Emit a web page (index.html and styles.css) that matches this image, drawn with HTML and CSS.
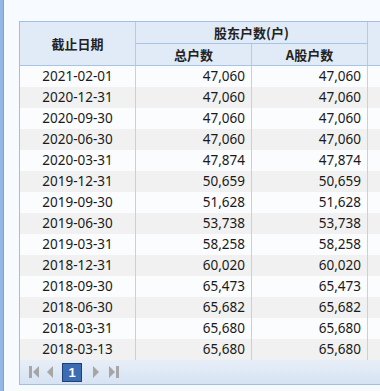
FILE: index.html
```html
<!DOCTYPE html>
<html lang="zh">
<head>
<meta charset="utf-8">
<link rel="stylesheet" href="styles.css">
</head>
<body>
<div class="edge"></div>
<div class="main">
  <div class="grid">
    <table class="tbl">
      <thead>
        <tr class="h1">
          <th rowspan="2" class="c">截止日期</th>
          <th colspan="2">股东户数(户)</th>
          <th rowspan="2"></th>
        </tr>
        <tr class="h2">
          <th>总户数</th>
          <th>A股户数</th>
        </tr>
      </thead>
      <tbody>
        <tr><td class="d">2021-02-01</td><td>47,060</td><td>47,060</td><td></td></tr>
        <tr><td class="d">2020-12-31</td><td>47,060</td><td>47,060</td><td></td></tr>
        <tr><td class="d">2020-09-30</td><td>47,060</td><td>47,060</td><td></td></tr>
        <tr><td class="d">2020-06-30</td><td>47,060</td><td>47,060</td><td></td></tr>
        <tr><td class="d">2020-03-31</td><td>47,874</td><td>47,874</td><td></td></tr>
        <tr><td class="d">2019-12-31</td><td>50,659</td><td>50,659</td><td></td></tr>
        <tr><td class="d">2019-09-30</td><td>51,628</td><td>51,628</td><td></td></tr>
        <tr><td class="d">2019-06-30</td><td>53,738</td><td>53,738</td><td></td></tr>
        <tr><td class="d">2019-03-31</td><td>58,258</td><td>58,258</td><td></td></tr>
        <tr><td class="d">2018-12-31</td><td>60,020</td><td>60,020</td><td></td></tr>
        <tr><td class="d">2018-09-30</td><td>65,473</td><td>65,473</td><td></td></tr>
        <tr><td class="d">2018-06-30</td><td>65,682</td><td>65,682</td><td></td></tr>
        <tr><td class="d">2018-03-31</td><td>65,680</td><td>65,680</td><td></td></tr>
        <tr><td class="d">2018-03-13</td><td>65,680</td><td>65,680</td><td></td></tr>
      </tbody>
    </table>
    <div class="pager">
      <svg class="ic first" width="10" height="12" viewBox="0 0 10 12"><rect x="0" y="0" width="3" height="12"/><polygon points="10,0 10,12 4,6"/></svg>
      <svg class="ic prev" width="7" height="12" viewBox="0 0 7 12"><polygon points="7,0 7,12 1,6"/></svg>
      <span class="pg">1</span>
      <svg class="ic next" width="7" height="12" viewBox="0 0 7 12"><polygon points="0,0 0,12 6,6"/></svg>
      <svg class="ic last" width="10" height="12" viewBox="0 0 10 12"><polygon points="0,0 0,12 6,6"/><rect x="7" y="0" width="3" height="12"/></svg>
    </div>
  </div>
</div>
</body>
</html>
```

FILE: styles.css
```css
html, body {
  margin: 0;
  padding: 0;
  height: 100%;
}
body {
  display: flex;
  background: #f7faff;
  font-family: "Noto Sans", "Noto Sans CJK SC", sans-serif;
  color: #1a1a1a;
  overflow: hidden;
}
.edge {
  width: 3px;
  flex: none;
  background: #92b6e6;
  border-right: 1px solid #7aa2d8;
}
.main {
  flex: 1;
  padding: 21px 0 0 15px;
  min-width: 0;
}
.grid {
  width: 361px;
  overflow: hidden;
  border-left: 1px solid #a3bfe0;
}
.tbl {
  border-collapse: separate;
  border-spacing: 0;
  table-layout: fixed;
  width: 464px;
  border-top: 1px solid #a3bfe0;
}
.tbl th {
  background: #e1ebf8;
  font-family: "Noto Sans CJK SC", sans-serif;
  font-size: 13px;
  font-weight: bold;
  line-height: 16px;
  padding: 0;
  border-right: 1px solid #c2c8d0;
  border-bottom: 1px solid #a8c4e4;
  text-align: center;
  color: #222;
}
.h1 th { height: 21px; }
.h2 th { height: 21px; }
.tbl th.c { padding-top: 1px; }
.tbl td {
  width: 115px;
  height: 21px;
  padding: 0 6px 0 0;
  border-right: 1px solid #cfcfcf;
  font-size: 13.5px;
  line-height: 21px;
  text-align: right;
  white-space: nowrap;
  box-sizing: border-box;
}
.tbl td.d {
  text-align: center;
  padding: 0;
}
.tbl tbody tr:nth-child(odd) td { background: #fbfcfe; }
.tbl tbody tr:nth-child(even) td { background: #f1f1f1; }
.pager {
  height: 24px;
  display: flex;
  align-items: center;
  padding-left: 9px;
  background: linear-gradient(#e7eef8, #d6e3f3);
  border-bottom: 1px solid #a3bfe0;
}
.ic { fill: #a6a6a6; flex: none; }
.first { margin-right: 7px; }
.prev { margin-right: 9px; }
.pg {
  box-sizing: border-box;
  width: 20px;
  height: 19px;
  background: #3c6db3;
  border: 1px solid #1d3f7c;
  color: #fff;
  font-family: "Liberation Sans", sans-serif;
  font-weight: bold;
  font-size: 13px;
  line-height: 17px;
  text-align: center;
  margin-right: 11px;
}
.next { margin-right: 9px; }
```
